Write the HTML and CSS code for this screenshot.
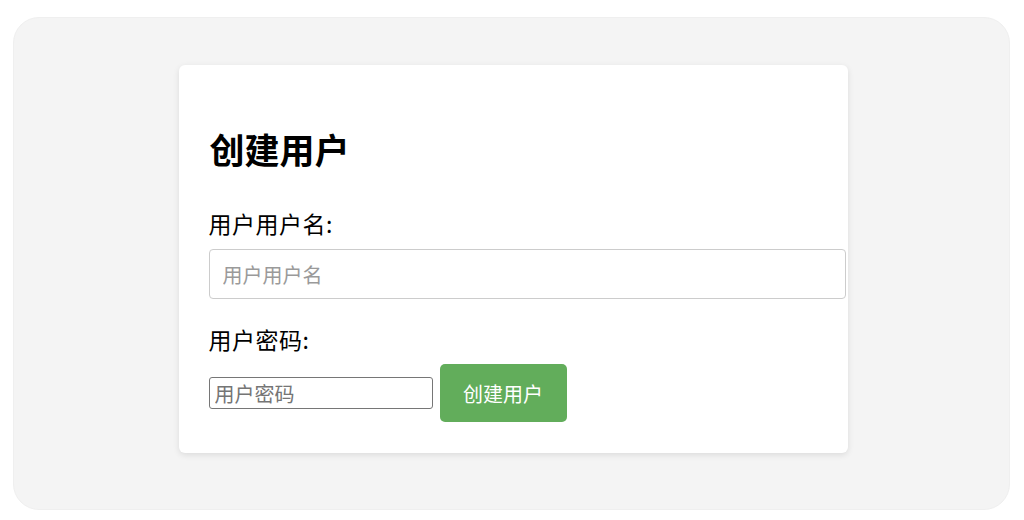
FILE: index.html
```html
<!DOCTYPE html>
<html lang="zh-CN">
<head>
<meta charset="utf-8">
<title>创建用户</title>
<link rel="stylesheet" href="styles.css">
</head>
<body>
<div class="panel">
  <form class="card">
    <h2 class="title">创建用户</h2>
    <label class="label" for="username">用户用户名:</label>
    <input class="text-input" id="username" type="text" placeholder="用户用户名">
    <label class="label label-second" for="password">用户密码:</label>
    <div class="row">
      <input class="pw-input" id="password" type="password" placeholder="用户密码">
      <button class="btn" type="button">创建用户</button>
    </div>
  </form>
</div>
</body>
</html>
```
FILE: styles.css
```css
html, body {
  margin: 0;
  padding: 0;
  background: #ffffff;
}

body {
  font-family: "Noto Sans CJK SC", "Noto Sans", sans-serif;
  color: #000;
}

.panel {
  margin: 17px 14px 0 13px;
  height: 493px;
  background: #f4f4f4;
  border: 1px solid #efefef;
  border-radius: 26px;
  display: flex;
  justify-content: center;
  align-items: flex-start;
  padding: 47px 0 0 3px;
  box-sizing: border-box;
}

.card {
  width: 669px;
  box-sizing: border-box;
  background: #ffffff;
  border-radius: 6px;
  box-shadow: 0 2px 6px rgba(0, 0, 0, 0.10);
  padding: 30px 30px 31px;
  display: flex;
  flex-direction: column;
  align-items: flex-start;
}

.title {
  margin: 34px 0 0 1px;
  font-size: 35px;
  line-height: 40px;
  font-weight: 700;
}

.label {
  display: block;
  margin-top: 38px;
  font-size: 23px;
  line-height: 32px;
  letter-spacing: 0.5px;
}

.label-second {
  margin-top: 24px;
}

.text-input {
  margin-top: 10px;
  width: 100%;
  height: 48px;
  padding: 0 13px;
  box-sizing: content-box;
  border: 1px solid #cccccc;
  border-radius: 4px;
  font-family: inherit;
  font-size: 20px;
  background: #fff;
  outline: none;
}

.text-input::placeholder {
  color: #9a9a9a;
}

.row {
  margin-top: 9px;
  display: flex;
  align-items: center;
  gap: 7px;
}

.pw-input {
  width: 224px;
  height: 32px;
  box-sizing: border-box;
  padding: 0 5px;
  border: 1px solid #767676;
  border-radius: 3px;
  font-family: inherit;
  font-size: 20px;
  background: #fff;
  outline: none;
}

.pw-input::placeholder {
  color: #757575;
}

.btn {
  height: 58px;
  width: 127px;
  padding: 0;
  border: none;
  border-radius: 5px;
  background: #62ad5b;
  color: #ffffff;
  font-family: inherit;
  font-size: 20px;
  cursor: pointer;
}
```
